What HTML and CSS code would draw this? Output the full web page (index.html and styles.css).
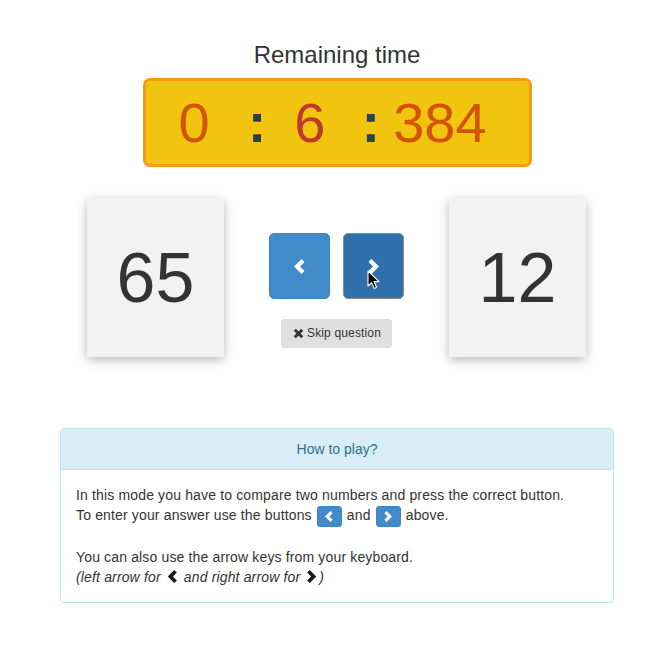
FILE: index.html
```html
<!DOCTYPE html>
<html>
<head>
<meta charset="utf-8">
<link rel="stylesheet" href="styles.css">
</head>
<body>
<div class="page">
  <h3 class="title">Remaining time</h3>
  <div class="timer">
    <span class="t-min">0</span>
    <span class="t-sep t-sep1">:</span>
    <span class="t-sec">6</span>
    <span class="t-sep t-sep2">:</span>
    <span class="t-ms">384</span>
  </div>

  <div class="game">
    <div class="card">65</div>
    <div class="middle">
      <div class="choices">
        <button class="btn-big btn-left" type="button">
          <svg class="chev" viewBox="0 0 11 15" width="11" height="15"><path d="M7.5 0 L10.5 3 L6 7.5 L10.5 12 L7.5 15 L0 7.5 Z"/></svg>
        </button>
        <button class="btn-big btn-right" type="button">
          <svg class="chev" viewBox="0 0 11 15" width="11" height="15"><path d="M3.5 0 L0.5 3 L5 7.5 L0.5 12 L3.5 15 L11 7.5 Z"/></svg>
        </button>
      </div>
      <button class="btn-skip" type="button"><svg class="x-icon" viewBox="0 0 11 11" width="11" height="11"><path d="M1.8 1.8 L9.2 9.2 M9.2 1.8 L1.8 9.2"/></svg> Skip question</button>
    </div>
    <div class="card">12</div>
  </div>

  <div class="panel">
    <div class="panel-heading">How to play?</div>
    <div class="panel-body">
      In this mode you have to compare two numbers and press the correct button.<br>
      To enter your answer use the buttons
      <span class="btn-xs"><svg viewBox="0 0 11 15" width="8" height="11"><path d="M7.5 0 L10.5 3 L6 7.5 L10.5 12 L7.5 15 L0 7.5 Z"/></svg></span>
      and
      <span class="btn-xs"><svg viewBox="0 0 11 15" width="8" height="11"><path d="M3.5 0 L0.5 3 L5 7.5 L0.5 12 L3.5 15 L11 7.5 Z"/></svg></span>
      above.<br><br>
      You can also use the arrow keys from your keyboard.<br>
      <em>(left arrow for <svg class="ichev" viewBox="0 0 11 15" width="11" height="13"><path d="M7.5 0 L10.5 3 L6 7.5 L10.5 12 L7.5 15 L0 7.5 Z"/></svg> and right arrow for <svg class="ichev" viewBox="0 0 11 15" width="11" height="13"><path d="M3.5 0 L0.5 3 L5 7.5 L0.5 12 L3.5 15 L11 7.5 Z"/></svg>)</em>
    </div>
  </div>
</div>
<svg class="cursor" viewBox="0 0 13 20" width="13" height="20"><path d="M1 1 L1 16 L4.6 12.6 L7.2 18.4 L9.6 17.3 L7 11.6 L12 11.6 Z" fill="#000" stroke="#fff" stroke-width="1.1" stroke-linejoin="round"/></svg>
</body>
</html>
```

FILE: styles.css
```css
html, body {
  margin: 0;
  padding: 0;
  background: #ffffff;
}
body {
  font-family: "Liberation Sans", Arial, sans-serif;
  font-size: 14px;
  line-height: 20px;
  color: #333333;
  position: relative;
}
.page {
  width: 554px;
  margin-left: 60px;
  padding-top: 42px;
}
.title {
  margin: 0 0 10px;
  font-size: 24px;
  line-height: 26px;
  font-weight: normal;
  text-align: center;
  color: #333333;
}
.timer {
  box-sizing: border-box;
  width: 389px;
  height: 89px;
  margin: 0 auto;
  background: #f1c40f;
  border: 3px solid #f39c12;
  border-radius: 7px;
  display: flex;
  align-items: baseline;
  padding-left: 33px;
  font-size: 56px;
  line-height: 83px;
  white-space: nowrap;
}
.t-min, .t-ms { color: #d35400; }
.t-sec { color: #c0392b; }
.t-sep {
  color: #2c3e50;
  font-weight: bold;
}
.t-min { margin-right: 38px; }
.t-sep1 { margin-right: 28px; }
.t-sec { margin-right: 36px; }
.t-sep2 { margin-right: 13px; }

.game {
  margin-top: 31px;
  display: grid;
  grid-template-columns: 137px 1fr 137px;
  padding: 0 28px 0 27px;
}
.card {
  height: 159px;
  background: #f2f2f2;
  box-shadow: 0 3px 10px rgba(0, 0, 0, 0.28);
  display: flex;
  align-items: center;
  justify-content: center;
  font-size: 70px;
  color: #333333;
}
.middle {
  padding-top: 35px;
  display: flex;
  flex-direction: column;
  align-items: center;
}
.choices {
  display: flex;
  gap: 13px;
}
.btn-big {
  width: 61px;
  height: 66px;
  border-radius: 5px;
  display: flex;
  align-items: center;
  justify-content: center;
  padding: 0;
  cursor: pointer;
}
.btn-left {
  background: #428bca;
  border: 1px solid #3d86c6;
}
.btn-right {
  background: #2f6fab;
  border: 1px solid #8c8c8c;
}
.chev { fill: #ffffff; display: block; }
.btn-skip {
  margin-top: 20px;
  height: 29px;
  padding: 0 10px 0 11px;
  background: #e0e0e0;
  border: 1px solid #dcdcdc;
  border-radius: 3px;
  font-family: "Liberation Sans", Arial, sans-serif;
  font-size: 12px;
  letter-spacing: 0.15px;
  color: #333333;
  line-height: 27px;
  display: flex;
  align-items: center;
}
.x-icon {
  stroke: #333333;
  stroke-width: 3;
  fill: none;
  display: block;
  margin-right: 3px;
}

.panel {
  margin-top: 71px;
  border: 1px solid #bce8f1;
  border-radius: 4px;
  background: #ffffff;
}
.panel-heading {
  background: #d9edf7;
  color: #31708f;
  border-bottom: 1px solid #bce8f1;
  border-radius: 3px 3px 0 0;
  padding: 10px 15px;
  text-align: center;
  line-height: 20px;
}
.panel-body {
  padding: 15px;
  line-height: 20px;
  letter-spacing: 0.15px;
}
.btn-xs {
  display: inline-block;
  box-sizing: border-box;
  width: 25px;
  height: 21px;
  padding-top: 4px;
  background: #428bca;
  border: 1px solid #3b87c8;
  border-radius: 3px;
  vertical-align: -7px;
  margin: 0 1px;
}
.btn-xs svg { fill: #ffffff; display: block; margin: 0 auto; }
.ichev {
  fill: #1a1a1a;
  vertical-align: -1px;
  margin: 0 2px;
}
.cursor {
  position: absolute;
  left: 367px;
  top: 270px;
}
```
